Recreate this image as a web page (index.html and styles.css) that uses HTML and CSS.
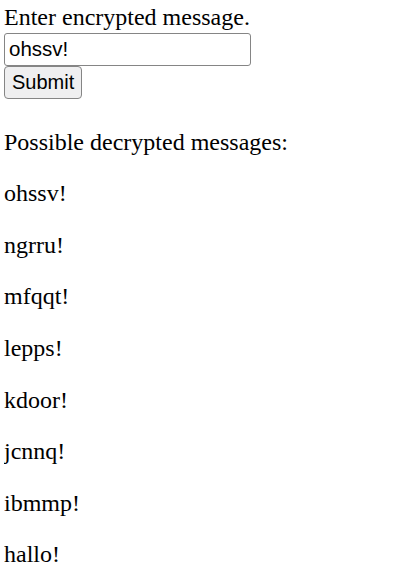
FILE: index.html
```html
<!DOCTYPE html>
<html>
<head>
<meta charset="utf-8">
<link rel="stylesheet" href="styles.css">
</head>
<body>
<form class="form">
  <div class="prompt">Enter encrypted message.</div>
  <input class="field" type="text" value="ohssv!">
  <button class="submit" type="button">Submit</button>
</form>
<p class="msg">Possible decrypted messages:</p>
<p class="msg">ohssv!</p>
<p class="msg">ngrru!</p>
<p class="msg">mfqqt!</p>
<p class="msg">lepps!</p>
<p class="msg">kdoor!</p>
<p class="msg">jcnnq!</p>
<p class="msg">ibmmp!</p>
<p class="msg">hallo!</p>
</body>
</html>
```
FILE: styles.css
```css
html, body {
  background: #fff;
}
body {
  margin: 4px;
  font-family: "Liberation Serif", "Times New Roman", serif;
  font-size: 24px;
  color: #000;
}
.form {
  display: flex;
  flex-direction: column;
  align-items: flex-start;
  padding-bottom: 6px;
  margin: 0;
}
.prompt {
  line-height: 27.6px;
  margin-bottom: 1px;
}
.field {
  box-sizing: border-box;
  width: 247px;
  height: 33px;
  margin: 0;
  padding: 1px 4px;
  border: 1px solid #858585;
  border-radius: 3px;
  font-family: "Liberation Sans", Arial, sans-serif;
  font-size: 20.5px;
  color: #000;
  background: #fff;
}
.submit {
  box-sizing: border-box;
  height: 33px;
  margin: 0;
  padding: 1px 7px;
  border: 1px solid #858585;
  border-radius: 4px;
  background: #efeff0;
  font-family: "Liberation Sans", Arial, sans-serif;
  font-size: 20px;
  color: #000;
}
.msg {
  margin: 24px 0;
  line-height: 27.6px;
}
```
